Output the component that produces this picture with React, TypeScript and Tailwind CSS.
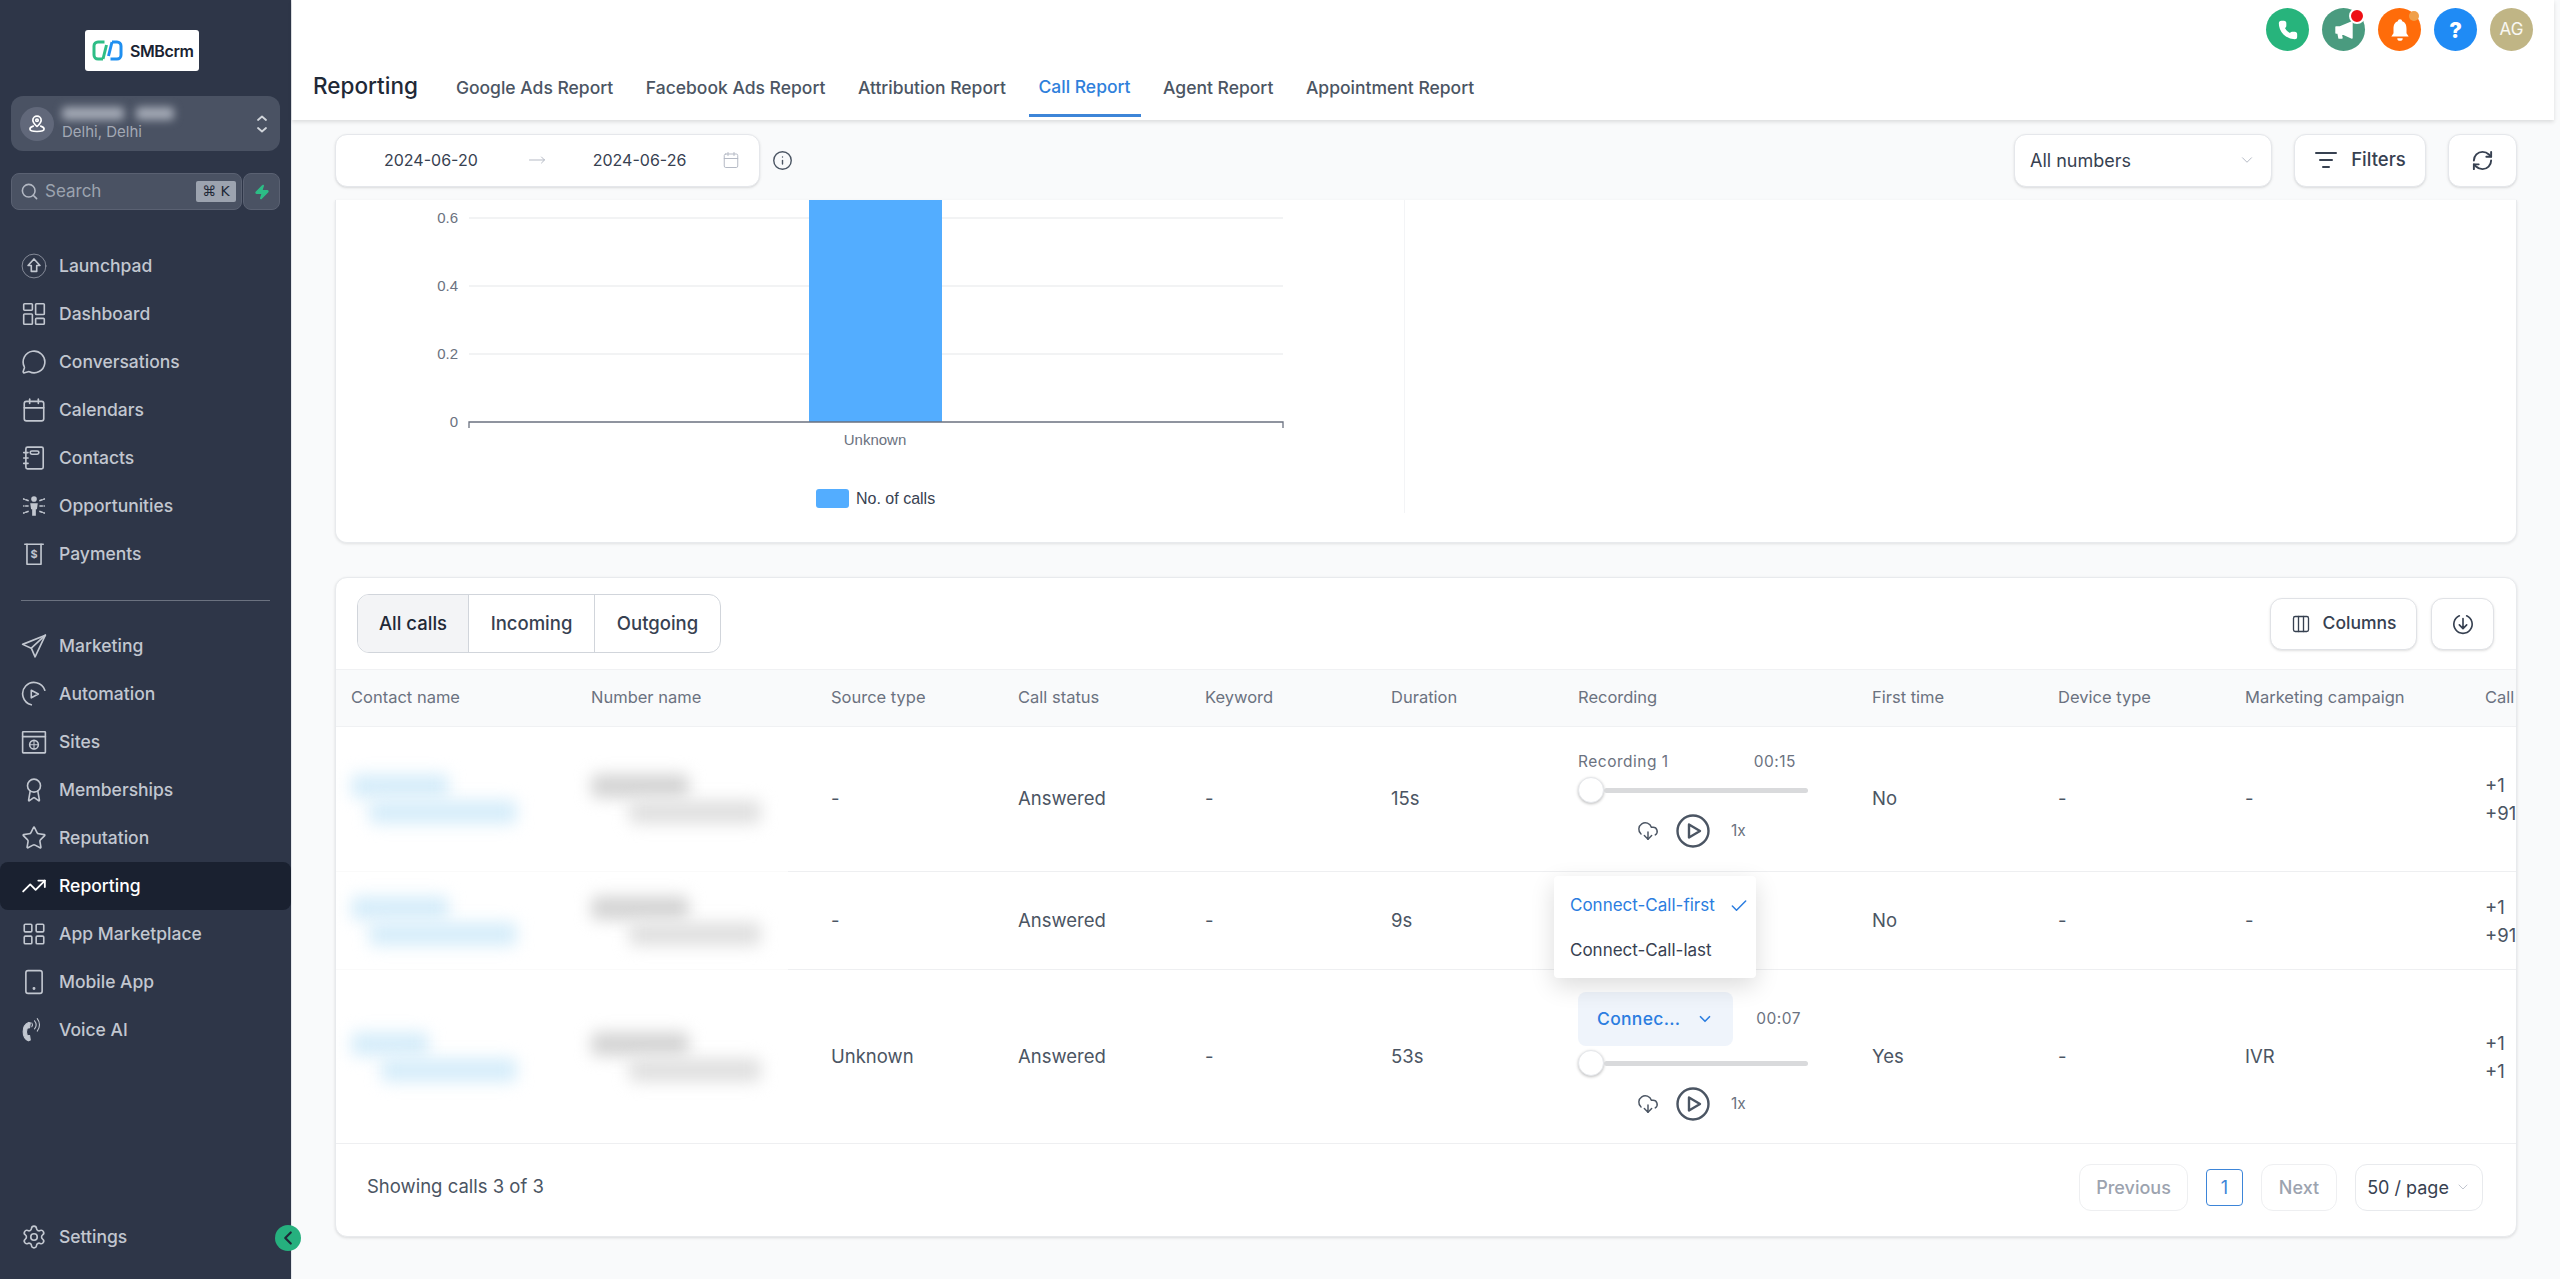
import {
  Award,
  Calendar,
  Check,
  ChevronDown,
  ChevronLeft,
  CloudDownload,
  Columns3,
  Info,
  LayoutGrid,
  ListFilter,
  MessageCircle,
  MoveRight,
  Phone,
  RefreshCw,
  Search,
  Settings,
  Star,
  TrendingUp,
  Zap,
} from 'lucide-react';
import type { ReactNode } from 'react';

const COLS =
  'grid grid-cols-[240px_240px_187px_187px_186px_187px_294px_186px_187px_240px_100px] w-[2334px]';

function Ico({ children }: { children: ReactNode }) {
  return (
    <svg width="26" height="26" viewBox="0 0 24 24" fill="none" stroke="currentColor" strokeWidth="1.5" strokeLinecap="round" strokeLinejoin="round">
      {children}
    </svg>
  );
}

const navTop: { label: string; icon: ReactNode }[] = [
  {
    label: 'Launchpad',
    icon: (
      <Ico>
        <circle cx="12" cy="12" r="11" strokeWidth="0.9" opacity="0.6" />
        <path d="M12 5.500l-5.500 6h3V17h5v-5.500h3z" />
      </Ico>
    ),
  },
  {
    label: 'Dashboard',
    icon: (
      <Ico>
        <rect x="2.5" y="2.5" width="8" height="6" rx="0.8" />
        <rect x="2.5" y="12" width="8" height="9.5" rx="0.8" />
        <rect x="13.5" y="2.5" width="8" height="10" rx="0.8" />
        <rect x="13.5" y="16" width="8" height="5.5" rx="0.8" />
      </Ico>
    ),
  },
  { label: 'Conversations', icon: <MessageCircle size={26} strokeWidth={1.5} /> },
  { label: 'Calendars', icon: <Calendar size={26} strokeWidth={1.5} /> },
  {
    label: 'Contacts',
    icon: (
      <Ico>
        <rect x="4.5" y="2" width="16" height="20" rx="1.5" />
        <rect x="8.5" y="5.5" width="8" height="3" rx="1.5" />
        <path d="M2.5 7h4M2.5 12h4M2.5 17h4" />
      </Ico>
    ),
  },
  {
    label: 'Opportunities',
    icon: (
      <Ico>
        <circle cx="12" cy="5.500" r="2.6" fill="currentColor" stroke="none" />
        <path d="M8.500 9.500h7l-.8 5.500h-1v6h-3.400v-6h-1z" fill="currentColor" stroke="none" />
        <path d="M6.500 7L2.500 5.500M6.500 12h-4M6.500 17l-4 1.500M17.500 7l4-1.500M17.500 12h4M17.500 17l4 1.500" strokeDasharray="2.200 1.600" />
      </Ico>
    ),
  },
  {
    label: 'Payments',
    icon: (
      <Ico>
        <path d="M3.500 3h17" />
        <path d="M5.500 3v18.500h13V3" />
        <text x="12" y="16" fontSize="10" fontWeight="700" textAnchor="middle" fill="currentColor" stroke="none">$</text>
      </Ico>
    ),
  },
];

const navBottom: { label: string; icon: ReactNode; active?: boolean }[] = [
  {
    label: 'Marketing',
    icon: (
      <Ico>
        <path d="M22.500 2L1.500 10.500l8 3.500 3.500 8z" />
        <path d="M22.500 2L9.500 14" />
      </Ico>
    ),
  },
  {
    label: 'Automation',
    icon: (
      <Ico>
        <path d="M22 8.500A10.500 10.500 0 1 0 9.500 22" />
        <path d="M9.500 8.500l6.500 3.500-6.500 3.500z" />
      </Ico>
    ),
  },
  {
    label: 'Sites',
    icon: (
      <Ico>
        <rect x="1.500" y="2.500" width="21" height="19.500" rx="0.5" />
        <path d="M1.500 7h21" />
        <circle cx="12" cy="14.500" r="4" />
        <path d="M8 14.500h8M12 10.500v8" strokeWidth="1" />
      </Ico>
    ),
  },
  { label: 'Memberships', icon: <Award size={26} strokeWidth={1.5} /> },
  { label: 'Reputation', icon: <Star size={26} strokeWidth={1.5} /> },
  { label: 'Reporting', icon: <TrendingUp size={28} strokeWidth={1.7} />, active: true },
  { label: 'App Marketplace', icon: <LayoutGrid size={26} strokeWidth={1.5} /> },
  {
    label: 'Mobile App',
    icon: (
      <Ico>
        <rect x="4.500" y="1.500" width="15" height="21" rx="2" />
        <circle cx="12" cy="18" r="0.6" fill="currentColor" />
      </Ico>
    ),
  },
  {
    label: 'Voice AI',
    icon: (
      <Ico>
        <path d="M7 5C3.500 6.500 2 9.500 2 13.500s1.800 7 4.800 8.500l1.800-.8-.7-4.200-2.200-.2c-.7-2-.7-4.500 0-6.500l2.200-.3.700-4.600z" fill="currentColor" strokeWidth="1" />
        <path d="M10 5.500a3 3 0 0 1 0 3.500M12.500 3.500a6 6 0 0 1 0 7.500M15 1.500a9 9 0 0 1 0 11.500" strokeWidth="1" />
      </Ico>
    ),
  },
];

function NavItem({ label, icon, active }: { label: string; icon: ReactNode; active?: boolean }) {
  return (
    <div className={`flex h-12 items-center gap-3 rounded-lg pl-[21px] text-[17.5px] font-medium ${active ? 'bg-[#1a2130] text-white' : 'text-[#c2c7d0]'}`}>
      <span className="flex w-[26px] justify-center">{icon}</span>
      <span>{label}</span>
    </div>
  );
}

function Sidebar() {
  return (
    <aside className="flex h-full w-[291px] shrink-0 flex-col bg-[#2e3648] pb-[18px] pt-[30px]">
      <div className="ml-[85px] flex h-[41px] w-[114px] items-center gap-[7px] rounded-[3px] bg-white pl-[7px]">
        <svg width="31" height="21" viewBox="0 0 31 21" fill="none" strokeWidth="3">
          <path d="M12.500 2H6a4 4 0 0 0-4 4v9a4 4 0 0 0 4 4h5" stroke="#2dbd86" />
          <path d="M11 19l3.500-14" stroke="#2dbd86" />
          <path d="M18.500 19H25a4 4 0 0 0 4-4V6a4 4 0 0 0-4-4h-5" stroke="#1f8ff0" />
          <path d="M20 2l-3.500 14" stroke="#1f8ff0" />
        </svg>
        <span className="text-[16px] font-semibold tracking-[-0.4px] text-[#1a2332]">SMBcrm</span>
      </div>

      <div className="mx-[11px] mt-[25px] flex h-[55px] items-center rounded-xl bg-[#4a5263] pl-[9px] pr-[12px]">
        <span className="flex h-[34px] w-[34px] items-center justify-center rounded-full bg-[#61687a] text-white">
          <svg width="20" height="20" viewBox="0 0 24 24" fill="none" stroke="currentColor" strokeWidth="2" strokeLinecap="round" strokeLinejoin="round">
            <path d="M12 15c-3-2.800-5-5-5-7.500a5 5 0 0 1 10 0C17 10 15 12.200 12 15z" />
            <circle cx="12" cy="7.500" r="1.500" />
            <path d="M7.500 14.500C5 15.200 3.500 16.500 3.500 18c0 2 3.800 3 8.500 3s8.500-1 8.500-3c0-1.500-1.500-2.800-4-3.500" />
          </svg>
        </span>
        <div className="ml-[8px] flex-1">
          <div className="flex gap-[12px]">
            <div className="h-[13px] w-[62px] rounded bg-[#a3a9b5] blur-[4px]" />
            <div className="h-[13px] w-[38px] rounded bg-[#a3a9b5] blur-[4px]" />
          </div>
          <div className="mt-[3px] text-[15px] leading-[18px] text-[#a3a9b5]">Delhi, Delhi</div>
        </div>
        <svg width="12" height="20" viewBox="0 0 12 20" fill="none" stroke="#d1d5db" strokeWidth="1.8" strokeLinecap="round" strokeLinejoin="round">
          <path d="M2 6l4-3.500L10 6M2 14l4 3.500L10 14" />
        </svg>
      </div>

      <div className="mx-[11px] mt-[22px] flex h-[37px] gap-px">
        <div className="flex flex-1 items-center rounded-lg border border-[#5a6172] bg-[#4a5263] pl-2 pr-[5px]">
          <Search size={19} strokeWidth={2} className="text-[#b3b8c3]" />
          <span className="ml-[6px] flex-1 text-[17px] text-[#9ca3af]">Search</span>
          <span className="flex h-[21px] w-10 items-center justify-center rounded-[2px] bg-[#9ca3af] text-[14px] font-medium text-[#1f2937] [font-family:'DejaVu_Sans',sans-serif]">⌘ K</span>
        </div>
        <div className="flex w-[37px] items-center justify-center rounded-lg border border-[#5a6172] bg-[#4a5263]">
          <Zap size={16} fill="#2dbd86" stroke="#2dbd86" />
        </div>
      </div>

      <nav className="mt-[32px]">
        {navTop.map((n) => (
          <NavItem key={n.label} label={n.label} icon={n.icon} />
        ))}
      </nav>
      <div className="mx-[21px] mb-[21px] mt-[22px] h-px bg-[#6b7280]" />
      <nav>
        {navBottom.map((n) => (
          <NavItem key={n.label} label={n.label} icon={n.icon} active={n.active} />
        ))}
      </nav>
      <div className="mt-auto">
        <NavItem label="Settings" icon={<Settings size={26} strokeWidth={1.5} />} />
      </div>
    </aside>
  );
}

function TopIcon({ bg, dot, children }: { bg: string; dot?: string; children: ReactNode }) {
  return (
    <span className={`relative flex h-[43px] w-[43px] items-center justify-center rounded-full ${bg}`}>
      {children}
      {dot && <span className={`absolute right-0 top-0 ${dot}`} />}
    </span>
  );
}

const tabs = ['Google Ads Report', 'Facebook Ads Report', 'Attribution Report', 'Call Report', 'Agent Report', 'Appointment Report'];

function Header() {
  return (
    <header className="mr-[6px] h-[120px] shrink-0 bg-white shadow-[0_2px_4px_rgba(0,0,0,0.12)]">
      <div className="flex h-[59px] justify-end gap-[13px] pr-[21px] pt-2">
        <TopIcon bg="bg-[#27b47c]"><Phone size={20} fill="white" stroke="white" /></TopIcon>
        <TopIcon bg="bg-[#4a9b7f]" dot="h-[16px] w-[16px] rounded-full border-2 border-white bg-[#ee0f14]">
          <svg width="24" height="24" viewBox="0 0 24 24" fill="white" stroke="white" strokeWidth="1.4" strokeLinejoin="round">
            <path d="M20 4L8 9H4v6h2l1 5h3l-1-5 11 5z" />
          </svg>
        </TopIcon>
        <TopIcon bg="bg-[#ff6c0a]" dot="h-[10px] w-[10px] translate-x-[-2px] translate-y-[3px] rounded-full bg-[#f0a04a]">
          <svg width="26" height="26" viewBox="0 0 24 24" fill="white">
            <path d="M12 2a2 2 0 0 1 2 2c3 1 4 3.500 4 7v4l2 3H4l2-3v-4c0-3.500 1-6 4-7a2 2 0 0 1 2-2z" />
            <path d="M9.500 19.500h5a2.500 2.500 0 0 1-5 0z" />
          </svg>
        </TopIcon>
        <TopIcon bg="bg-[#1f8bf5]"><span className="text-[22px] font-extrabold leading-none text-white">?</span></TopIcon>
        <TopIcon bg="bg-[#c0b585]"><span className="text-[17px] text-white/90">AG</span></TopIcon>
      </div>
      <div className="flex h-[58px] pl-[21px]">
        <div className="mr-[28px] pb-[7px] pt-[12px] text-[22.5px] font-medium leading-[30px] text-[#1f2937]">Reporting</div>
        <div className="flex gap-[12.5px]">
          {tabs.map((t) => (
            <div key={t} className={`px-[10px] text-[17.5px] font-medium leading-[24px] ${t === 'Call Report' ? 'border-b-[3px] border-[#3d85d8] pt-[15.5px] text-[#2f80db]' : 'pt-[17px] text-[#4b5563]'}`}>
              {t}
            </div>
          ))}
        </div>
      </div>
    </header>
  );
}

function FilterBar() {
  return (
    <div className="flex h-[80px] shrink-0 items-center px-[43px]">
      <div className="flex h-[53px] w-[425px] items-center rounded-xl border border-[#e5e7eb] bg-white pl-[48px] text-[16px] text-[#374151] shadow-sm">
        <span>2024-06-20</span>
        <MoveRight size={18} strokeWidth={1.3} className="ml-[50px] text-[#b3b8c3]" />
        <span className="ml-[47px]">2024-06-26</span>
        <Calendar size={18} strokeWidth={1.3} className="ml-[36px] text-[#b3b8c3]" />
      </div>
      <Info size={21} strokeWidth={1.6} className="ml-[12px] text-[#4b5563]" />
      <div className="ml-auto flex h-[53px] w-[258px] items-center justify-between rounded-xl border border-[#e5e7eb] bg-white pl-[15px] pr-[15px] text-[18px] text-[#374151] shadow-sm">
        All numbers
        <ChevronDown size={18} strokeWidth={1.3} className="text-[#b3b8c3]" />
      </div>
      <button className="ml-[22px] flex h-[53px] w-[132px] items-center justify-center gap-[13px] rounded-xl border border-[#e5e7eb] bg-white text-[18.5px] font-medium text-[#374151] shadow-sm">
        <ListFilter size={24} strokeWidth={2} /> Filters
      </button>
      <button className="ml-[22px] flex h-[53px] w-[69px] items-center justify-center rounded-xl border border-[#e5e7eb] bg-white text-[#374151] shadow-sm">
        <RefreshCw size={23} strokeWidth={2} />
      </button>
    </div>
  );
}

function ChartCard() {
  return (
    <section className="h-[343px] shrink-0 rounded-b-xl border-x border-b border-[#e8eaed] bg-white shadow-[0_1px_3px_rgba(0,0,0,0.1)]">
      <div className="h-[313px] w-[1069px] border-r border-[#f3f4f6]">
        <svg width="1068" height="313" viewBox="1 0 1068 313" className="[font-family:'Liberation_Sans',sans-serif]">
          {[18, 86, 154].map((y) => (
            <line key={y} x1="134" x2="948" y1={y} y2={y} stroke="#eeeff1" strokeWidth="1.5" />
          ))}
          <rect x="474" y="0" width="133" height="222" fill="#53adff" />
          <path d="M134 228v-6h814v6" fill="none" stroke="#6b7280" strokeWidth="1.3" />
          {[['0.6', 23], ['0.4', 91], ['0.2', 159], ['0', 227]].map(([t, y]) => (
            <text key={t} x="123" y={y} textAnchor="end" fontSize="15" fill="#6b7280">{t}</text>
          ))}
          <text x="540" y="245" textAnchor="middle" fontSize="15" fill="#6b7280">Unknown</text>
          <rect x="481" y="289" width="33" height="19" rx="3" fill="#53adff" />
          <text x="521" y="304" fontSize="16" fill="#374151">No. of calls</text>
        </svg>
      </div>
    </section>
  );
}

function Slider() {
  return (
    <div className="flex h-[26px] w-[230px] items-center">
      <span className="h-[26px] w-[26px] shrink-0 rounded-full border border-[#e5e7eb] bg-white shadow-[0_1px_3px_rgba(0,0,0,0.25)]" />
      <span className="h-[5px] flex-1 rounded-full bg-[#d9dadc]" />
    </div>
  );
}

function PlayerControls() {
  return (
    <div className="mt-[11px] flex h-[34px] w-[230px] items-center pl-[59px] text-[#4b5563]">
      <CloudDownload size={22} strokeWidth={1.6} />
      <svg width="34" height="34" viewBox="0 0 34 34" fill="none" stroke="#4b5563" strokeWidth="2.4" strokeLinejoin="round" className="ml-[17px]">
        <circle cx="17" cy="17" r="15.500" />
        <path d="M13 10.500l11 6.500-11 6.500z" />
      </svg>
      <span className="ml-[21px] text-[15.5px] text-[#6b7280]">1x</span>
    </div>
  );
}

function Recording1() {
  return (
    <div className="w-[230px]">
      <div className="flex h-[24px] items-center justify-between pr-[12px] text-[15.5px] tracking-[0.5px] text-[#6b7280]">
        <span>Recording 1</span>
        <span>00:15</span>
      </div>
      <div className="mt-[3px]"><Slider /></div>
      <PlayerControls />
    </div>
  );
}

function Recording3() {
  return (
    <div className="w-[230px]">
      <div className="flex items-center justify-between pr-[7px]">
        <div className="flex h-[54px] w-[155px] items-center gap-[16px] rounded-lg bg-[#eff4fb] pl-[19px] text-[17.5px] font-medium tracking-[0.3px] text-[#2b7de0]">
          Connec...
          <ChevronDown size={18} strokeWidth={2.2} />
        </div>
        <span className="text-[15.5px] tracking-[0.5px] text-[#6b7280]">00:07</span>
      </div>
      <div className="mt-[4px]"><Slider /></div>
      <PlayerControls />
    </div>
  );
}

function Dropdown() {
  return (
    <div className="absolute left-[-9px] top-[4px] z-10 h-[102px] w-[202px] rounded-sm bg-white pl-[16px] pt-[7px] text-[17px] leading-[45px] shadow-[0_8px_24px_rgba(0,0,0,0.14)]">
      <div className="flex items-center text-[#2b7de0]">
        Connect-Call-first
        <Check size={20} strokeWidth={1.8} className="ml-[14px]" />
      </div>
      <div className="text-[#374151]">Connect-Call-last</div>
    </div>
  );
}

function BlurredName({ short }: { short?: boolean }) {
  return (
    <div className="flex flex-col gap-[2px] pl-[15px]">
      <div className={`h-[24px] rounded-md bg-[#d6edfa] blur-[8px] ${short ? 'w-[78px]' : 'w-[98px]'}`} />
      <div className={`h-[24px] rounded-md bg-[#d6edfa] blur-[8px] ${short ? 'ml-[30px] w-[136px]' : 'ml-[18px] w-[148px]'}`} />
    </div>
  );
}

function BlurredNumber() {
  return (
    <div className="flex flex-col gap-[2px] pl-[15px]">
      <div className="h-[24px] w-[98px] rounded-md bg-[#d4d4d4] blur-[8px]" />
      <div className="ml-[38px] h-[24px] w-[132px] rounded-md bg-[#e0e0e0] blur-[8px]" />
    </div>
  );
}

type Row = { h: string; source: string; dur: string; first: string; campaign: string; second: string; rec: ReactNode; short?: boolean };

const rows: Row[] = [
  { h: 'h-[144px]', source: '-', dur: '15s', first: 'No', campaign: '-', second: '+91', rec: <Recording1 /> },
  { h: 'h-[97px]', source: '-', dur: '9s', first: 'No', campaign: '-', second: '+91', rec: <Dropdown /> },
  { h: 'h-[173px]', source: 'Unknown', dur: '53s', first: 'Yes', campaign: 'IVR', second: '+1', rec: <Recording3 />, short: true },
];

function Cell({ children }: { children: ReactNode }) {
  return <div className="flex items-center pl-[15px]">{children}</div>;
}

function TableCard() {
  return (
    <section className="mt-[34px] h-[660px] shrink-0 overflow-hidden rounded-xl border border-[#e8eaed] bg-white shadow-[0_1px_3px_rgba(0,0,0,0.12)]">
      <div className="flex h-[91px] items-center justify-between pl-[21px] pr-[22px]">
        <div className="flex h-[59px] overflow-hidden rounded-xl border border-[#d1d5db] text-[18.5px] font-medium text-[#374151]">
          <div className="flex w-[111px] items-center justify-center border-r border-[#d1d5db] bg-[#f3f4f6] text-[#1f2937]">All calls</div>
          <div className="flex w-[126px] items-center justify-center border-r border-[#d1d5db]">Incoming</div>
          <div className="flex w-[125px] items-center justify-center">Outgoing</div>
        </div>
        <div className="flex gap-[14px] text-[#374151]">
          <button className="flex h-[52px] w-[147px] items-center justify-center gap-[12px] rounded-xl border border-[#e0e2e6] bg-white text-[17.5px] font-medium shadow-sm">
            <Columns3 size={20} strokeWidth={1.6} /> Columns
          </button>
          <button className="flex h-[52px] w-[63px] items-center justify-center rounded-xl border border-[#e0e2e6] bg-white shadow-sm">
            <svg width="22" height="22" viewBox="0 0 24 24" fill="none" stroke="currentColor" strokeWidth="1.8" strokeLinecap="round" strokeLinejoin="round">
              <path d="M8 3a10 10 0 1 0 8 0" />
              <path d="M12 6v11M8 13l4 4 4-4" />
            </svg>
          </button>
        </div>
      </div>

      <div className="overflow-hidden">
        <div className={`${COLS} h-[58px] items-center border-y border-[#f0f1f3] bg-[#f9fafb] pb-[2px] text-[16.5px] text-[#6b7280]`}>
          {['Contact name', 'Number name', 'Source type', 'Call status', 'Keyword', 'Duration', 'Recording', 'First time', 'Device type', 'Marketing campaign', 'Call'].map((h) => (
            <div key={h} className="whitespace-nowrap pl-[15px]">{h}</div>
          ))}
        </div>
        {rows.map((r, i) => (
          <div key={i}>
            {i > 0 && (
              <div className="flex h-px">
                <div className="w-[452px] bg-[#fafafa]" />
                <div className="flex-1 bg-[#eeeff1]" />
              </div>
            )}
            <div className={`${COLS} ${r.h} text-[18.5px] text-[#4b5563]`}>
              <div className="flex items-center"><BlurredName short={r.short} /></div>
              <div className="flex items-center"><BlurredNumber /></div>
              <Cell>{r.source}</Cell>
              <Cell>Answered</Cell>
              <Cell>-</Cell>
              <Cell>{r.dur}</Cell>
              <div className="relative flex items-center pl-[15px]">{r.rec}</div>
              <Cell>{r.first}</Cell>
              <Cell>-</Cell>
              <Cell>{r.campaign}</Cell>
              <div className="flex flex-col justify-center pl-[15px] leading-[28px]">
                <span>+1</span>
                <span>{r.second}</span>
              </div>
            </div>
          </div>
        ))}
      </div>

      <div className="flex h-[92px] items-center justify-between border-t border-[#eeeff1] pb-[5px] pl-[31px] pr-[33px] text-[18px]">
        <span className="text-[18.5px] text-[#4b5563]">Showing calls 3 of 3</span>
        <div className="flex items-center font-medium">
          <button className="h-[47px] w-[109px] rounded-xl border border-[#eeeff1] text-[#9ca3af]">Previous</button>
          <span className="ml-[18px] flex h-[37px] w-[37px] items-center justify-center rounded-[4px] border border-[#3d85d8] font-normal text-[#3d85d8]">1</span>
          <button className="ml-[18px] h-[47px] w-[76px] rounded-xl border border-[#eeeff1] text-[#9ca3af]">Next</button>
          <div className="ml-[18px] flex h-[47px] w-[128px] items-center justify-center gap-[6px] rounded-xl border border-[#e8eaed] font-normal text-[#374151]">
            50 / page
            <ChevronDown size={16} strokeWidth={1.2} className="text-[#b3b8c3]" />
          </div>
        </div>
      </div>
    </section>
  );
}

export default function App() {
  return (
    <div className="relative flex h-[1279px] w-[2560px] overflow-hidden bg-[#f9fafb] [font-family:Inter,sans-serif]">
      <Sidebar />
      <main className="flex min-w-0 flex-1 flex-col border-l border-[#e5e7eb]">
        <Header />
        <FilterBar />
        <div className="flex flex-col px-[43px]">
          <ChartCard />
          <TableCard />
        </div>
      </main>
      <button className="absolute left-[275px] top-[1225px] flex h-[26px] w-[26px] items-center justify-center rounded-full bg-[#26b07e] text-[#1f2937]">
        <ChevronLeft size={22} strokeWidth={2.4} />
      </button>
    </div>
  );
}
